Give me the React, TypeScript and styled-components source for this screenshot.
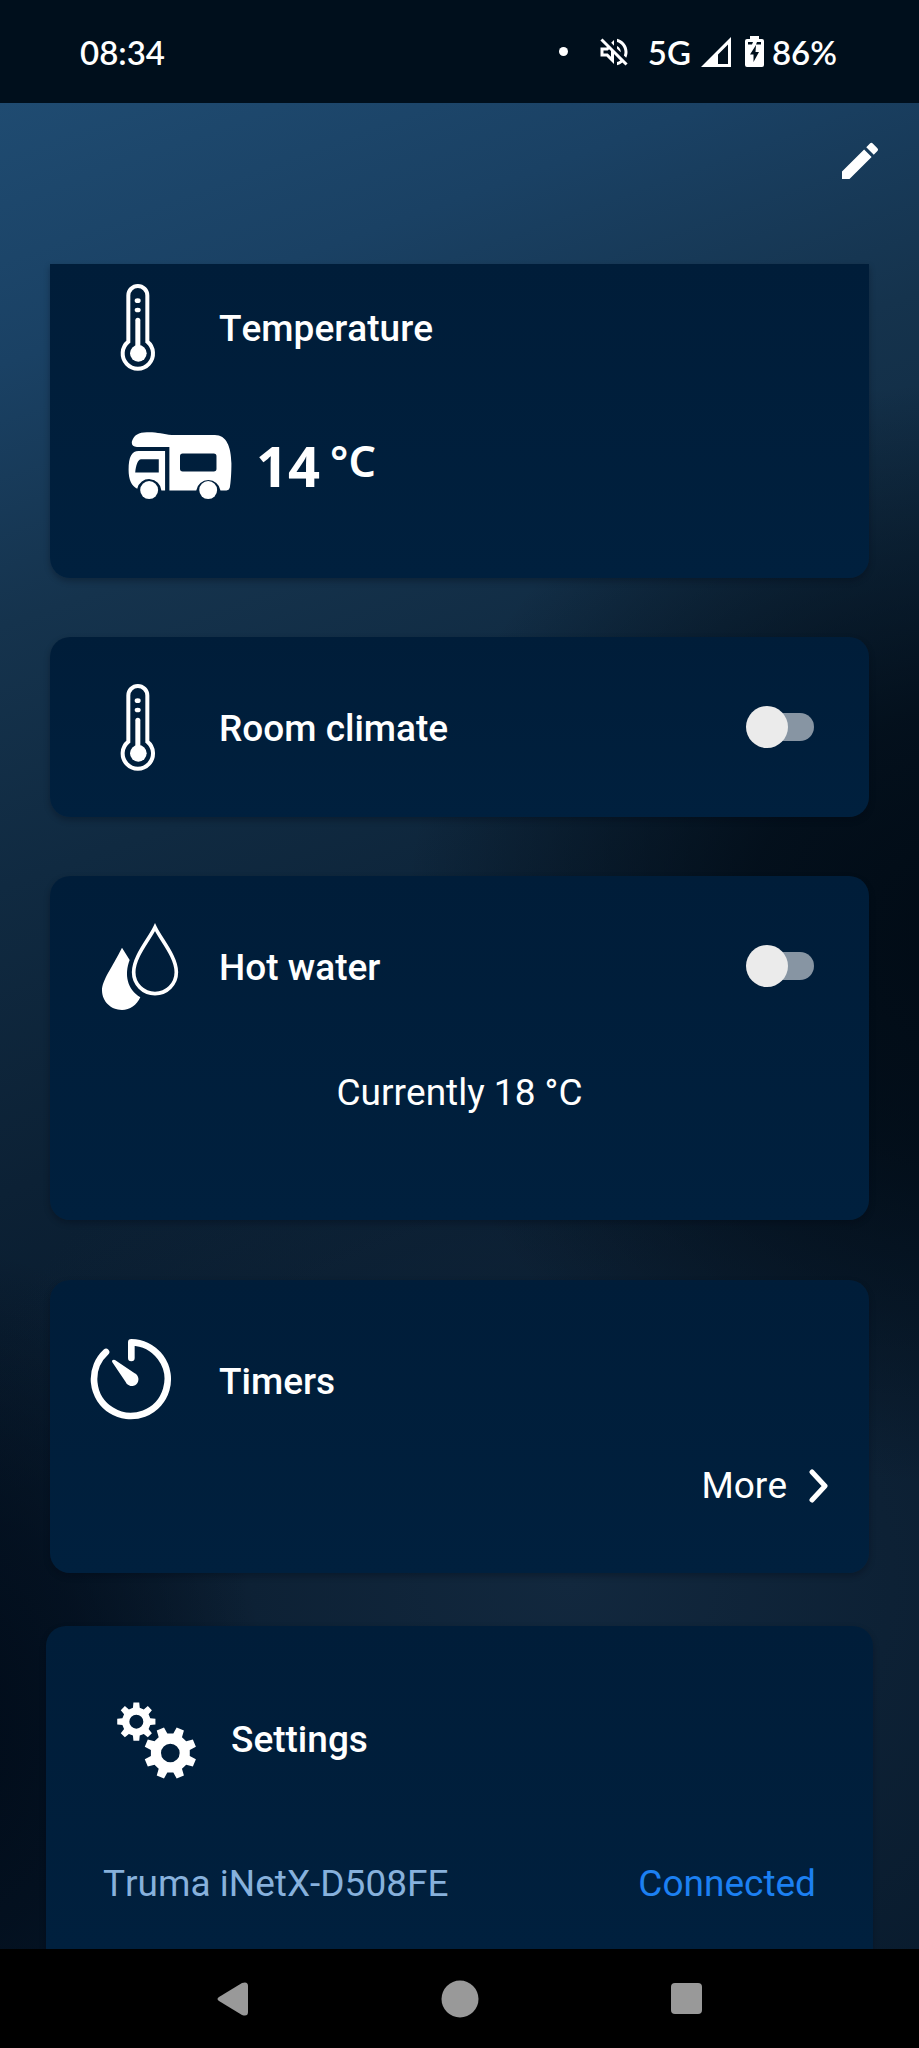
import React from 'react';
import styled, { createGlobalStyle } from 'styled-components';
import { MdEdit, MdOutlineVolumeOff } from 'react-icons/md';

const GlobalStyle = createGlobalStyle`
  *, *::before, *::after { box-sizing: border-box; }
  body {
    margin: 0;
    background: #000;
    color: #fff;
    font-family: Roboto, 'Liberation Sans', sans-serif;
    font-kerning: none;
  }
`;

const Screen = styled.div`
  min-height: 100vh;
  display: flex;
  flex-direction: column;
`;

const StatusBar = styled.header`
  display: flex;
  align-items: center;
  justify-content: space-between;
  height: 103px;
  padding: 0 82px 0 80px;
  background: #000f1c;
  font-family: Lato, sans-serif;
  font-weight: 600;
  font-size: 33px;
  line-height: 40px;
`;

const StatusGroup = styled.div`
  display: flex;
  align-items: center;
  gap: 10px;
`;

const NotificationDot = styled.span`
  width: 9px;
  height: 9px;
  margin-right: 18px;
  border-radius: 50%;
  background: #fff;
`;

const MuteIcon = styled(MdOutlineVolumeOff)`
  width: 36px;
  height: 36px;
  margin-right: 6px;
`;

const BatteryLevel = styled.span`
  display: flex;
  align-items: center;
  gap: 8px;
  margin-left: 4px;
`;

const Content = styled.main`
  flex: 1;
  display: flex;
  flex-direction: column;
  background:
    radial-gradient(ellipse 62% 30% at 106% 45%, #010b15 0%, #010b15cc 40%, #010b1500 100%),
    radial-gradient(ellipse 34% 26% at -5% 88%, #010c1a 0%, #010c1ab0 45%, #010c1a00 100%),
    radial-gradient(ellipse 70% 30% at 62% 80%, #12283e 0%, #12283e00 100%),
    linear-gradient(160deg, #1f4b71 0%, #1a4164 12%, #15334d 24%, #102a41 36%, #0c2135 50%, #081a2c 64%, #081a2c 100%);
`;

const Toolbar = styled.div`
  display: flex;
  justify-content: flex-end;
  height: 161px;
  padding: 34px 35px 0;
`;

const IconButton = styled.button`
  width: 48px;
  height: 48px;
  padding: 0;
  border: 0;
  background: none;
  color: #fff;
  cursor: pointer;
`;

const Card = styled.section<{ $gap?: number; $cut?: 'top' | 'bottom' }>`
  margin: ${p => p.$gap ?? 0}px ${p => (p.$cut === 'bottom' ? 46 : 50)}px 0;
  border-radius: ${p =>
    p.$cut === 'top' ? '0 0 20px 20px' : p.$cut === 'bottom' ? '20px 20px 0 0' : '20px'};
  background: linear-gradient(#001d39, #00203e);
  box-shadow: 0 3px 6px rgba(0, 8, 18, 0.3);
  ${p => p.$cut === 'bottom' && 'flex: 1;'}
`;

const CardHead = styled.div<{ $top: number; $bottom?: number; $left?: number }>`
  display: flex;
  align-items: center;
  gap: 29px;
  padding: ${p => p.$top}px 55px ${p => p.$bottom ?? 0}px ${p => p.$left ?? 40}px;
`;

const CardIcon = styled.svg`
  flex: none;
  width: 100px;
  height: 100px;
  fill: #fff;
`;

const Title = styled.h2`
  flex: 1;
  margin: 0;
  padding-top: 4px;
  font-size: 37px;
  line-height: 44px;
  font-weight: 500;
`;

const Toggle = styled.input`
  appearance: none;
  display: grid;
  align-items: center;
  width: 68px;
  height: 42px;
  margin: 0;
  cursor: pointer;

  &::before,
  &::after {
    content: '';
    grid-area: 1 / 1;
    border-radius: 21px;
  }
  &::before {
    height: 28px;
    margin-left: 7px;
    background: #8795a3;
  }
  &::after {
    width: 42px;
    height: 42px;
    background: #ebebeb;
  }
  &:checked::after {
    justify-self: end;
  }
`;

const Reading = styled.div`
  display: flex;
  align-items: center;
  gap: 24px;
  height: 188px;
  padding: 0 55px 38px 78px;
  font-family: 'Noto Sans', sans-serif;
`;

const ReadingValue = styled.p`
  display: flex;
  align-items: flex-start;
  gap: 10px;
  margin: 0;
  font-size: 56px;
  line-height: 64px;
  font-weight: 700;
`;

const Unit = styled.span`
  font-size: 43px;
  line-height: 56px;
  font-weight: 600;
`;

const Note = styled.p`
  margin: 0;
  padding: 15px 0 105px;
  text-align: center;
  font-size: 37px;
  line-height: 44px;
`;

const MoreRow = styled.div`
  display: flex;
  justify-content: flex-end;
  padding: 34px 40px 65px;
`;

const MoreLink = styled.a`
  display: flex;
  align-items: center;
  gap: 22px;
  color: #fff;
  font-size: 37px;
  line-height: 44px;
  text-decoration: none;
`;

const DeviceRow = styled.div`
  display: flex;
  justify-content: space-between;
  padding: 74px 57px 43px;
  color: #87b1dc;
  font-size: 37px;
  line-height: 44px;
`;

const Connected = styled.span`
  color: #1c80f2;
`;

const NavBar = styled.nav`
  display: grid;
  grid-template-columns: repeat(3, 1fr);
  height: 99px;
  padding: 0 13%;
  background: #000;
`;

const NavButton = styled.button`
  display: flex;
  align-items: center;
  justify-content: center;
  padding: 0;
  border: 0;
  background: none;
  cursor: pointer;
`;

const ThermometerIcon = () => (
  <CardIcon viewBox="150 171 300 300" aria-hidden="true">
    <path
      d="M265 365V226.500a28.500 28.500 0 0 1 57 0V365A45.500 45.500 0 1 1 265 365Z"
      fill="none"
      stroke="#fff"
      strokeWidth="12"
    />
    <path d="M293.500 301V400" stroke="#fff" strokeWidth="15" strokeLinecap="round" />
    <circle cx="295" cy="400" r="25" />
    <ellipse cx="293" cy="242" rx="9" ry="7" />
    <ellipse cx="293" cy="270" rx="9" ry="7" />
  </CardIcon>
);

const DropsIcon = () => (
  <CardIcon viewBox="150 168 300 300" aria-hidden="true">
    <path
      d="M345 202C328 238 281 290 281 337A64 64 0 0 0 409 337C409 290 362 238 345 202Z"
      fill="none"
      stroke="#fff"
      strokeWidth="11"
    />
    <path d="M246 263L269 300C252 345 262 388 301 412C290 436 270 450 246 450C213 450 186 425 186 391C186 360 217 322 246 263Z" />
  </CardIcon>
);

const TimerIcon = () => (
  <CardIcon viewBox="150 210 300 300" aria-hidden="true">
    <path
      d="M274 294V247A110.500 110.500 0 1 1 198 276"
      fill="none"
      stroke="#fff"
      strokeWidth="20"
      strokeLinecap="round"
      strokeLinejoin="round"
    />
    <path d="M217 307L257 366A20 20 0 1 0 284 340L225 300Q220 298 217 301Q215 304 217 307Z" />
  </CardIcon>
);

// Eight-toothed gear with slightly tapered teeth and a round hole.
const gearPath = (cx: number, cy: number, outer: number, root: number, hole: number, turn: number) => {
  const points: string[] = [];
  for (let i = 0; i < 8; i++) {
    const mid = ((i * 45 + turn) * Math.PI) / 180;
    ([[root, -0.24], [outer, -0.15], [outer, 0.15], [root, 0.24]] as const).forEach(([r, a]) => {
      points.push(`${(cx + r * Math.sin(mid + a)).toFixed(1)} ${(cy - r * Math.cos(mid + a)).toFixed(1)}`);
    });
  }
  return `M${points.join('L')}ZM${cx - hole} ${cy}a${hole} ${hole} 0 1 0 ${2 * hole} 0a${hole} ${hole} 0 1 0 ${-2 * hole} 0Z`;
};

const GearsIcon = () => (
  <CardIcon viewBox="186 204 300 300" fillRule="evenodd" aria-hidden="true">
    <path d={gearPath(289, 305, 58, 43, 21, 0)} />
    <path d={gearPath(391, 399, 79, 59, 28, 22.5)} />
  </CardIcon>
);

const MotorhomeIcon = () => (
  <svg width="104" height="67" viewBox="264 546 312 202" fill="#fff" fillRule="evenodd" aria-hidden="true">
    <path d="M388 722V591H290C277 591 272 582 276 572C282 556 295 547 320 547C350 546 370 553 395 555H525C560 555 574 590 575 640C575 670 573 700 570 714Q568 722 560 722H542A37 37 0 0 0 469 722ZM428 611Q420 611 420 619V657Q420 665 428 665H522Q530 665 530 657V619Q530 611 522 611Z" />
    <path d="M375 722H364A37 37 0 0 0 291 717C274 709 265 690 265 660C265 620 275 603 295 603H375ZM303 628C292 628 287 648 285 668H356V628Z" />
    <circle cx="327" cy="721" r="27" />
    <circle cx="505" cy="721" r="27" />
  </svg>
);

const SignalIcon = () => (
  <svg width="30" height="30" viewBox="0 0 30 30" fill="#fff" fillRule="evenodd" aria-hidden="true">
    <path d="M0 30L30 0V30ZM17 17.500V27H27V7.500Z" />
  </svg>
);

const BatteryIcon = () => (
  <svg width="19" height="31" viewBox="0 0 19 31" fill="#fff" fillRule="evenodd" aria-hidden="true">
    <path d="M5 0H14V3H17Q19 3 19 5V29Q19 31 17 31H2Q0 31 0 29V5Q0 3 2 3H5ZM3 6V8.500H7L8 6ZM12 6L11 8.500H16V6ZM11 9L5 18.500H8.500V26L14 16H10.500Z" />
  </svg>
);

const ChevronIcon = () => (
  <svg width="20" height="34" viewBox="0 0 20 34" fill="none" aria-hidden="true">
    <path d="M3 3L16 17L3 31" stroke="#fff" strokeWidth="5" strokeLinecap="round" strokeLinejoin="round" />
  </svg>
);

export default function App() {
  return (
    <Screen>
      <GlobalStyle />
      <StatusBar>
        <span>08:34</span>
        <StatusGroup>
          <NotificationDot />
          <MuteIcon aria-hidden="true" />
          <span>5G</span>
          <SignalIcon />
          <BatteryLevel>
            <BatteryIcon />
            86%
          </BatteryLevel>
        </StatusGroup>
      </StatusBar>

      <Content>
        <Toolbar>
          <IconButton type="button" aria-label="Edit">
            <MdEdit size={48} />
          </IconButton>
        </Toolbar>

        <Card $cut="top">
          <CardHead $top={13} $bottom={13}>
            <ThermometerIcon />
            <Title>Temperature</Title>
          </CardHead>
          <Reading>
            <MotorhomeIcon />
            <ReadingValue>
              14<Unit>°C</Unit>
            </ReadingValue>
          </Reading>
        </Card>

        <Card $gap={59}>
          <CardHead $top={40} $bottom={40}>
            <ThermometerIcon />
            <Title as="label" htmlFor="room-climate">Room climate</Title>
            <Toggle type="checkbox" id="room-climate" />
          </CardHead>
        </Card>

        <Card $gap={59}>
          <CardHead $top={40} $bottom={40}>
            <DropsIcon />
            <Title as="label" htmlFor="hot-water">Hot water</Title>
            <Toggle type="checkbox" id="hot-water" />
          </CardHead>
          <Note>Currently 18 °C</Note>
        </Card>

        <Card $gap={60}>
          <CardHead $top={50}>
            <TimerIcon />
            <Title>Timers</Title>
          </CardHead>
          <MoreRow>
            <MoreLink href="#timers">
              More
              <ChevronIcon />
            </MoreLink>
          </MoreRow>
        </Card>

        <Card $gap={53} $cut="bottom">
          <CardHead $top={62} $left={56}>
            <GearsIcon />
            <Title>Settings</Title>
          </CardHead>
          <DeviceRow>
            <span>Truma iNetX-D508FE</span>
            <Connected>Connected</Connected>
          </DeviceRow>
        </Card>
      </Content>

      <NavBar>
        <NavButton type="button" aria-label="Back">
          <svg width="32" height="34" viewBox="0 0 32 34" fill="#999">
            <path d="M2 15L25 1Q31 -1 31 4V30Q31 35 25 33L2 19Q-1 17 2 15Z" />
          </svg>
        </NavButton>
        <NavButton type="button" aria-label="Home">
          <svg width="38" height="38" viewBox="0 0 38 38" fill="#999">
            <circle cx="19" cy="19" r="18.500" />
          </svg>
        </NavButton>
        <NavButton type="button" aria-label="Recent apps">
          <svg width="31" height="31" viewBox="0 0 31 31" fill="#999">
            <rect width="31" height="31" rx="4" />
          </svg>
        </NavButton>
      </NavBar>
    </Screen>
  );
}
